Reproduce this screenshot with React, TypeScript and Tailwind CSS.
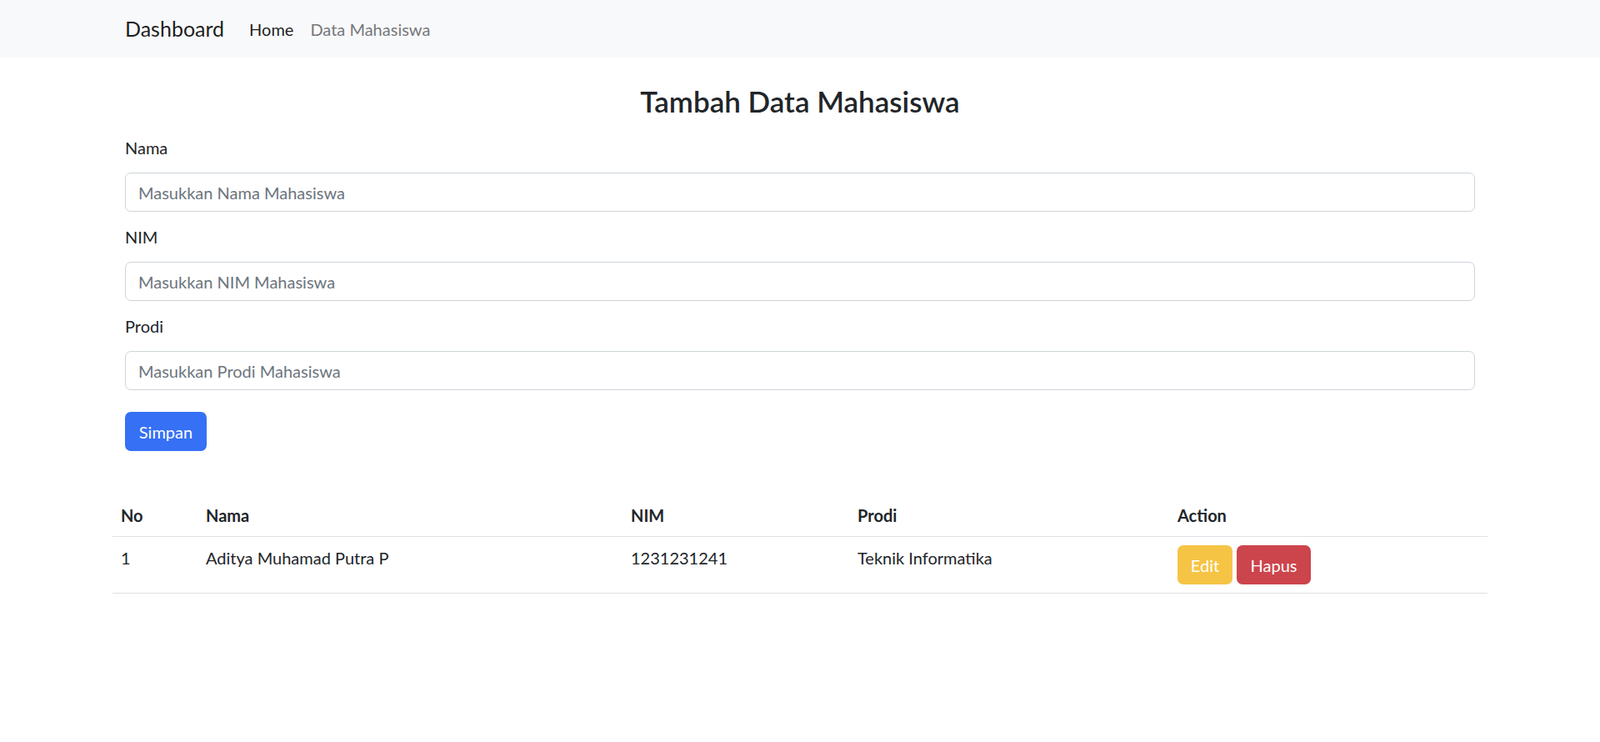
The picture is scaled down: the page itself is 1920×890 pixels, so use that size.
import { useState } from "react"

const fields = [
  { label: "Nama", placeholder: "Masukkan Nama Mahasiswa" },
  { label: "NIM", placeholder: "Masukkan NIM Mahasiswa" },
  { label: "Prodi", placeholder: "Masukkan Prodi Mahasiswa" },
]

const mahasiswa = [
  { no: 1, nama: "Aditya Muhamad Putra P", nim: "1231231241", prodi: "Teknik Informatika" },
]

export default function App() {
  const [values, setValues] = useState<Record<string, string>>({})

  return (
    <div className="min-h-screen bg-white text-[#212529] font-['Lato','Liberation_Sans',sans-serif] text-[20px]">
      {/* Navbar */}
      <nav className="bg-[#f8f9fa] h-[69px]">
        <div className="max-w-[1650px] mx-auto px-[15px] h-full flex items-center">
          <a href="#" className="text-[25px] leading-[37px] text-black/90 mr-[20px]">
            Dashboard
          </a>
          <a href="#" className="px-[10px] text-[20px] leading-[30px] text-black/90">
            Home
          </a>
          <a href="#" className="px-[10px] text-[20px] leading-[30px] text-[#76787b]">
            Data Mahasiswa
          </a>
        </div>
      </nav>

      <div className="max-w-[1650px] mx-auto">
        {/* Form */}
        <div className="px-[15px]">
          <h3 className="mt-[31px] mb-[20px] text-center text-[35px] leading-[42px] font-semibold">
            Tambah Data Mahasiswa
          </h3>

          <form onSubmit={(e) => e.preventDefault()}>
            {fields.map((field) => (
              <div key={field.label} className="mb-[15px]">
                <label className="block leading-[30px] mb-[15px]">{field.label}</label>
                <input
                  type="text"
                  placeholder={field.placeholder}
                  value={values[field.label] ?? ""}
                  onChange={(e) => setValues({ ...values, [field.label]: e.target.value })}
                  className="block w-full h-[47px] px-[15px] border border-[#ced4da] rounded-[7px] text-[20px] outline-none placeholder:text-[#6c757d]"
                />
              </div>
            ))}
            <button
              type="submit"
              className="mt-[11px] w-[98px] h-[47px] rounded-[7px] bg-[#3570f5] text-white text-[20px]"
            >
              Simpan
            </button>
          </form>
        </div>

        {/* Table */}
        <table className="mt-[52px] w-full table-fixed border-collapse">
          <thead>
            <tr>
              <th className="w-[102px] p-[10px] leading-[30px] text-left font-bold border-b border-[#dee2e6]">No</th>
              <th className="w-[510px] p-[10px] leading-[30px] text-left font-bold border-b border-[#dee2e6]">Nama</th>
              <th className="w-[272px] p-[10px] leading-[30px] text-left font-bold border-b border-[#dee2e6]">NIM</th>
              <th className="w-[384px] p-[10px] leading-[30px] text-left font-bold border-b border-[#dee2e6]">Prodi</th>
              <th className="p-[10px] leading-[30px] text-left font-bold border-b border-[#dee2e6]">Action</th>
            </tr>
          </thead>
          <tbody>
            {mahasiswa.map((m) => (
              <tr key={m.nim}>
                <td className="p-[10px] leading-[30px] align-top border-b border-[#dee2e6]">{m.no}</td>
                <td className="p-[10px] leading-[30px] align-top border-b border-[#dee2e6]">{m.nama}</td>
                <td className="p-[10px] leading-[30px] align-top border-b border-[#dee2e6]">{m.nim}</td>
                <td className="p-[10px] leading-[30px] align-top border-b border-[#dee2e6]">{m.prodi}</td>
                <td className="p-[10px] align-top border-b border-[#dee2e6]">
                  <div className="flex gap-[5px]">
                    <button className="w-[66px] h-[47px] rounded-[7px] bg-[#f6c445] text-white text-[20px]">Edit</button>
                    <button className="w-[89px] h-[47px] rounded-[7px] bg-[#cc454c] text-white text-[20px]">Hapus</button>
                  </div>
                </td>
              </tr>
            ))}
          </tbody>
        </table>
      </div>
    </div>
  )
}
